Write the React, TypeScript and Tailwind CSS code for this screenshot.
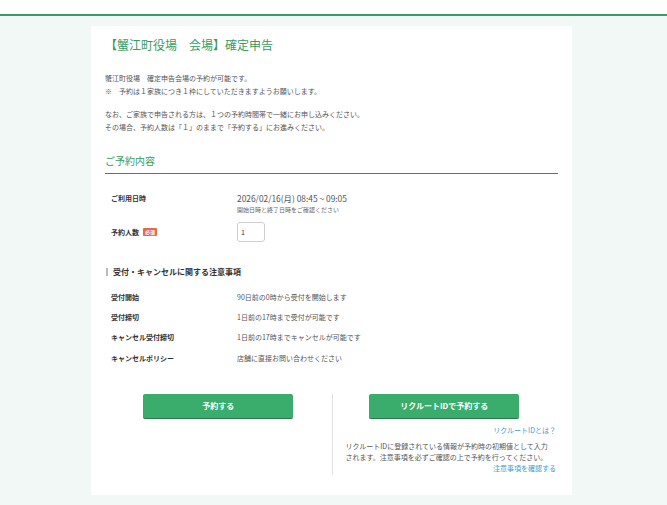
const rules = [
  { label: "受付開始", value: "90日前の0時から受付を開始します" },
  { label: "受付締切", value: "1日前の17時まで受付が可能です" },
  { label: "キャンセル受付締切", value: "1日前の17時までキャンセルが可能です" },
  { label: "キャンセルポリシー", value: "店舗に直接お問い合わせください" },
];

export default function App() {
  return (
    <div
      className="min-h-[505px] bg-[#f2f8f5] text-[#444]"
      style={{ fontFamily: '"Noto Sans CJK JP", "Noto Sans", sans-serif' }}
    >
      <div className="h-[14px] bg-white" />
      <div className="h-[2px] bg-[#3d9b67]" />
      <div className="pt-[10px] pb-[11px]">
        <div className="ml-[91px] w-[481px] bg-white px-[14px] pt-[11px] pb-[20px]">
          <h1 className="text-[12px] leading-[16px] text-[#3a9a62]">【蟹江町役場　会場】確定申告</h1>

          <div className="mt-[19px] text-[7px] leading-[12.5px] text-[#555]">
            <p>蟹江町役場　確定申告会場の予約が可能です。</p>
            <p>※　予約は１家族につき１枠にしていただきますようお願いします。</p>
            <p className="mt-[11px]">なお、ご家族で申告される方は、１つの予約時間帯で一緒にお申し込みください。</p>
            <p>その場合、予約人数は「１」のままで「予約する」にお進みください。</p>
          </div>

          <h2 className="mt-[21px] border-b border-[#3a8a5c] pb-[5px] text-[10px] leading-[14px] text-[#3a9a62]">
            ご予約内容
          </h2>

          <div className="mt-[18px] flex pl-[6px]">
            <div className="w-[126px] text-[7px] font-bold leading-[12px] text-[#333]">ご利用日時</div>
            <div>
              <div className="text-[8.4px] leading-[12px] text-[#555]">2026/02/16(月) 08:45 ~ 09:05</div>
              <div className="mt-[1px] text-[6px] leading-[10px] text-[#666]">開始日時と終了日時をご確認ください</div>
            </div>
          </div>

          <div className="mt-[7px] flex items-center pl-[6px]">
            <div className="flex w-[126px] items-center gap-[4px] text-[7px] font-bold leading-[12px] text-[#333]">
              予約人数
              <span className="rounded-[1px] bg-[#e2694b] px-[2px] text-[5px] leading-[8px] text-white">必須</span>
            </div>
            <div className="flex h-[20px] w-[28px] items-center rounded-[3px] border border-[#cfcfcf] pl-[3px] text-[7px] text-[#333]">
              1
            </div>
          </div>

          <div className="mt-[24px] flex items-center gap-[5px] pl-[1px]">
            <span className="h-[8px] w-[2px] bg-[#bbb]" />
            <span className="text-[8px] font-bold leading-[12px] text-[#333]">受付・キャンセルに関する注意事項</span>
          </div>

          <div className="mt-[9px] pl-[6px]">
            {rules.map((r) => (
              <div key={r.label} className="flex h-[20.3px] items-center text-[7px]">
                <div className="w-[126px] font-bold text-[#333]">{r.label}</div>
                <div className="text-[#555]">{r.value}</div>
              </div>
            ))}
          </div>

          <div className="mt-[26px] grid grid-cols-2">
            <div className="flex justify-center">
              <button className="h-[25px] w-[150px] rounded-[2px] border-b border-[#2a7a4c] bg-[#3aac6c] text-[8px] font-bold text-white">
                予約する
              </button>
            </div>
            <div className="border-l border-[#e2e2e2] pb-[2px] pl-[13px] pr-[2px]">
              <div className="flex justify-center">
                <button className="ml-[-13px] h-[25px] w-[150px] rounded-[2px] border-b border-[#2a7a4c] bg-[#3aac6c] text-[8px] font-bold text-white">
                  リクルートIDで予約する
                </button>
              </div>
              <div className="mt-[6px] text-right text-[7px] leading-[10px] text-[#3d9ccc]">リクルートIDとは？</div>
              <p className="mt-[6px] text-[7px] leading-[11px] text-[#555]">
                リクルートIDに登録されている情報が予約時の初期値として入力
                <br />
                されます。注意事項を必ずご確認の上で予約を行ってください。
              </p>
              <div className="text-right text-[7px] leading-[10px] text-[#3d9ccc]">注意事項を確認する</div>
            </div>
          </div>
        </div>
      </div>
    </div>
  );
}
